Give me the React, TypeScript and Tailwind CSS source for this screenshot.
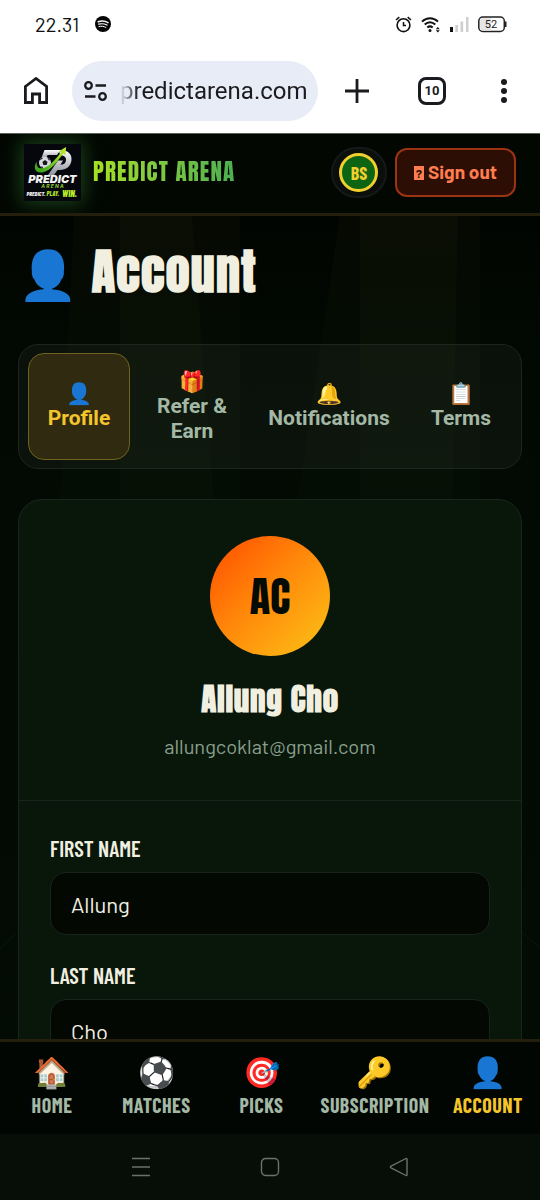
import type { ReactNode } from 'react';

const tabs = [
  { icon: '👤', label: 'Profile', active: true },
  { icon: '🎁', label: 'Refer & Earn', active: false },
  { icon: '🔔', label: 'Notifications', active: false },
  { icon: '📋', label: 'Terms', active: false },
];

const links = [
  { icon: '🏠', label: 'HOME', active: false },
  { icon: '⚽', label: 'MATCHES', active: false },
  { icon: '🎯', label: 'PICKS', active: false },
  { icon: '🔑', label: 'SUBSCRIPTION', active: false },
  { icon: '👤', label: 'ACCOUNT', active: true },
];

function StatusBar() {
  return (
    <div className="flex h-12 shrink-0 items-center justify-between pr-[33px] pl-[35px] text-[#111]">
      <div className="flex items-center gap-4">
        <span className="font-['Barlow',sans-serif] text-xl leading-6">22.31</span>
        <svg width="16" height="16" viewBox="0 0 16 16" aria-hidden="true">
          <circle cx="8" cy="8" r="8" fill="#050505" />
          <g fill="none" stroke="#fff" strokeLinecap="round">
            <path d="M3.2 5.7c3.3-1 7-.7 9.8.9" strokeWidth="1.5" />
            <path d="M3.6 8.2c2.9-.8 5.9-.5 8.4.9" strokeWidth="1.2" />
            <path d="M4 10.5c2.5-.6 4.8-.3 6.9.9" strokeWidth="1" />
          </g>
        </svg>
      </div>
      <div className="flex items-center gap-[9px]">
        <svg width="17" height="17" viewBox="0 0 17 17" fill="none" stroke="#111" aria-hidden="true">
          <circle cx="8.5" cy="9.2" r="6.4" strokeWidth="1.6" />
          <path d="M8.5 6v3.5H11" strokeWidth="1.5" />
          <path d="M1 4 4.300 1.200M16 4 12.700 1.200" strokeWidth="1.6" />
        </svg>
        <svg width="20" height="17" viewBox="0 0 20 17" fill="none" stroke="#111" aria-hidden="true">
          <path d="M1 5.600C5.800 1 12.200 1 17 5.600" strokeWidth="2" />
          <path d="M3.700 8.600c3.300-3 7.300-3 10.600 0" strokeWidth="2" />
          <path d="M6.300 11.500c1.800-1.500 3.600-1.500 5.400 0" strokeWidth="2" />
          <circle cx="9" cy="14.5" r="1.5" fill="#111" stroke="none" />
          <path d="M14.800 13.200h4l-2-2.200zM14.800 14.200h4l-2 2.200z" fill="#111" stroke="none" />
        </svg>
        <svg width="19" height="17" viewBox="0 0 19 17" aria-hidden="true">
          <path d="M0 11h3v5H0z" fill="#111" />
          <path d="M5.300 9H8v7H5.300zM10.500 5.500h2.700V16h-2.700zM16 1h2.500v15H16z" fill="#cfcfcf" />
        </svg>
        <svg width="29" height="17" viewBox="0 0 29 17" aria-hidden="true">
          <rect x=".8" y="1" width="25.5" height="14.5" rx="4" fill="#fff" stroke="#222" strokeWidth="1.5" />
          <path d="M2 5a3 3 0 0 1 3-3h8v12.500H5a3 3 0 0 1-3-3z" fill="#e6e6e6" />
          <path d="M27 5.500h1.500v5.500H27z" fill="#222" />
          <text x="13" y="12.3" textAnchor="middle" fontSize="11" fontFamily="Roboto, sans-serif" fill="#222">52</text>
        </svg>
      </div>
    </div>
  );
}

function BrowserBar() {
  return (
    <div className="flex h-[85px] shrink-0 items-center pr-[33px] pl-6 text-[#1b1b1f]">
      <button type="button" aria-label="Home page" className="h-7 w-6">
        <svg width="24" height="28" viewBox="0 0 24 28" fill="none" stroke="currentColor" strokeWidth="2.8" aria-hidden="true">
          <path d="M1.400 9.500 12 1.500l10.600 8V25.500h-7v-8.500H8.400v8.500h-7z" />
        </svg>
      </button>
      <div className="ml-6 flex h-[60px] min-w-0 flex-1 items-center gap-3 rounded-full bg-[#e8ecf6] px-3">
        <svg className="shrink-0" width="24" height="20" viewBox="0 0 24 20" fill="none" stroke="currentColor" strokeWidth="2.3" aria-hidden="true">
          <circle cx="4.5" cy="4.5" r="3.3" />
          <path d="M11.500 4.500H22M1 15.500h10.500" />
          <circle cx="18.5" cy="15.5" r="3.3" />
        </svg>
        <span className="bg-linear-to-r from-transparent to-[#1b1b1f] to-[18px] bg-clip-text font-['Roboto',sans-serif] text-2xl text-transparent">predictarena.com</span>
      </div>
      <button type="button" aria-label="New tab" className="ml-[27px]">
        <svg width="24" height="24" viewBox="0 0 24 24" stroke="currentColor" strokeWidth="2.8" aria-hidden="true">
          <path d="M0 12h24M12 0v24" />
        </svg>
      </button>
      <button type="button" aria-label="Tabs" className="ml-[49px] flex size-7 items-center justify-center rounded-lg border-[3px] border-[#1b1b1f] font-['Roboto',sans-serif] text-[13px] font-bold">10</button>
      <button type="button" aria-label="Menu" className="ml-[55px] flex flex-col gap-[3px]">
        <i className="size-1.5 rounded-full bg-[#1b1b1f]" />
        <i className="size-1.5 rounded-full bg-[#1b1b1f]" />
        <i className="size-1.5 rounded-full bg-[#1b1b1f]" />
      </button>
    </div>
  );
}

function Logo() {
  return (
    <svg className="size-[57px] shrink-0 shadow-[0_0_18px_3px_rgba(50,120,50,0.5)]" viewBox="0 0 57 57" role="img" aria-label="Predict Arena logo">
      <defs>
        <linearGradient id="silver" x1="0" y1="0" x2="0" y2="1">
          <stop offset="0" stopColor="#fff" />
          <stop offset="1" stopColor="#8c9199" />
        </linearGradient>
        <linearGradient id="lime" x1="0" y1="1" x2="1" y2="0">
          <stop offset="0" stopColor="#2f9e1c" />
          <stop offset="1" stopColor="#c4f02c" />
        </linearGradient>
      </defs>
      <path fill="#06070c" d="M0 0h57v57H0z" />
      <path d="M20.500 6h16L33 11h-9.500l-1.500 4-4.800-.5z" fill="url(#silver)" />
      <path d="M35 6c8.500-.3 13 3.600 12.500 10C47 22.500 42 26 36 26h-2.500l-3.800 5.500h-6L34 16.500h5l-2.600 4.300c3.400 0 5.300-1.600 5.600-4.600.3-3.200-2-5-6-4.700z" fill="url(#silver)" />
      <circle cx="21" cy="18.8" r="6" fill="#d5d8dc" />
      <path d="m21 16 2.600 1.900-1 3.100h-3.200l-1-3.100zM15.600 16.500l1.600-2.500 2 .3zM23 13.300l2.800 1.700-.6 2zM16.500 22.500l2.500.3-.6 1.600zM24 24l1-2 1.400-.8z" fill="#15171c" />
      <path d="M12.500 17.500c-3.800 7.500-.8 12 6.500 10.800C27 26.500 34 17 39 9.500l2.500 1.500L42 3l-7 4.200 2 1.300C31 16 24.500 23.500 18 24.300c-4 .5-5.700-2-5.500-6.800z" fill="url(#lime)" />
      <g fontStyle="italic" fontFamily="Inter, sans-serif">
        <text x="28.5" y="39.3" textAnchor="middle" fontSize="11" fontWeight="900" fill="#f2f2f2">PREDICT</text>
        <text x="28.5" y="44.3" textAnchor="middle" fontSize="5" fontWeight="700" fill="#8fd02c">A R E N A</text>
      </g>
      <g fontStyle="italic" fontFamily="'Barlow Condensed', sans-serif" fontWeight="800">
        <text x="2.5" y="52" fontSize="6" fill="#eee">PREDICT.</text>
        <text x="22.5" y="52" fontSize="6.5" fill="#a8e02a">PLAY.</text>
        <text x="38" y="52.5" fontSize="9" fill="#b8ee2c">WIN.</text>
      </g>
    </svg>
  );
}

function Header() {
  return (
    <header className="flex h-[83px] shrink-0 items-center overflow-hidden border-t border-b-[3px] border-t-[#566058] border-b-[#231f0c] bg-[#020702] pr-6 pb-0.5 pl-6">
      <a href="#home" className="flex items-center gap-3">
        <Logo />
        <span className="bg-linear-to-r from-[#a6e022] to-[#4caf50] bg-clip-text font-['Anton',sans-serif] text-[23px] tracking-wider whitespace-nowrap text-transparent">PREDICT ARENA</span>
      </a>
      <div className="ml-auto flex items-center gap-2">
        <button type="button" className="flex h-[51px] w-14 items-center justify-center rounded-full border-2 border-[#15191a] bg-[#0a0f0b]">
          <span className="flex size-[39px] items-center justify-center rounded-full border-[3px] border-[#f0cf2e] bg-[#0d6413] font-['Barlow_Condensed',sans-serif] text-lg font-bold text-[#f0d02c]">BS</span>
        </button>
        <button type="button" className="flex h-[49px] items-center gap-1 rounded-xl border-2 border-[#9c3313] bg-[#2c0e04] px-[17px] font-['Barlow',sans-serif] text-[19px] font-bold whitespace-nowrap text-[#ff7d4f]">
          <span className="flex h-[14px] w-[10px] items-center justify-center bg-[#ff7d4f] text-xs text-[#2c0e04]">?</span>
          Sign out
        </button>
      </div>
    </header>
  );
}

function Backdrop() {
  return (
    <svg className="pointer-events-none absolute inset-0 h-full w-full" viewBox="0 0 540 825" preserveAspectRatio="none" aria-hidden="true">
      <defs>
        <linearGradient id="beam" x1="0" y1="0" x2="0" y2="1">
          <stop offset="0" stopColor="#6a6420" stopOpacity=".045" />
          <stop offset="1" stopColor="#3a6a20" stopOpacity=".03" />
        </linearGradient>
        <linearGradient id="ground" x1="0" y1="0" x2="0" y2="1">
          <stop offset="0" stopColor="#010501" />
          <stop offset=".3" stopColor="#020a03" />
          <stop offset="1" stopColor="#030c04" />
        </linearGradient>
      </defs>
      <path fill="url(#ground)" d="M0 0h540v825H0z" />
      <path fill="url(#beam)" d="M74 0h118l22 290H60z" />
      <path fill="url(#beam)" d="M120 0h120v290H120z" />
      <path fill="url(#beam)" d="M340 0h118l-6 290H297z" />
      <path fill="url(#beam)" d="M360 0h120v290H360z" />
      <path fill="none" stroke="#0a170c" strokeWidth="1" d="M0 734 20 716M540 734l-20-18" />
    </svg>
  );
}

function Field({ id, label, value }: { id: string; label: string; value: string }) {
  return (
    <div className="flex flex-col gap-2">
      <label htmlFor={id} className="font-['Barlow_Condensed',sans-serif] text-[22px] leading-8 font-semibold text-[#f1efe0]">{label}</label>
      <input id={id} defaultValue={value} className="h-[63px] w-full rounded-2xl border border-[#1a231b] bg-[#030803] px-5 font-['Barlow',sans-serif] text-[22px] text-[#f1efe0]" />
    </div>
  );
}

function SystemButton({ label, children }: { label: string; children: ReactNode }) {
  return (
    <button type="button" aria-label={label}>
      <svg width="20" height="20" viewBox="0 0 20 20" fill="none" stroke="#6b716c" strokeWidth="1.4" strokeLinejoin="round" aria-hidden="true">{children}</svg>
    </button>
  );
}

export default function App() {
  return (
    <div className="flex h-screen flex-col overflow-hidden bg-white">
      <StatusBar />
      <BrowserBar />
      <Header />
      <div className="relative min-h-0 flex-1 overflow-hidden bg-[#020702]">
        <Backdrop />
        <main className="relative px-[18px] pt-5">
          <h1 className="font-['Anton',sans-serif] text-5xl leading-[72px] font-bold tracking-wide text-[#f1efe0]">👤 Account</h1>
          <nav aria-label="Account sections" className="mt-9 grid h-[125px] grid-cols-[102fr_112fr_150fr_102fr] gap-1.5 rounded-[20px] border border-[#1c261e] bg-[#ffffff0a] px-[9px] py-2">
            {tabs.map((tab) => (
              <button
                key={tab.label}
                type="button"
                className={`flex flex-col items-center justify-center rounded-2xl px-3 font-['Roboto',sans-serif] text-[21px] leading-[25px] font-bold ${
                  tab.active ? 'border border-[#6e621e] bg-[#302b10] text-[#f5c52c]' : 'text-[#a3b8a5]'
                }`}
              >
                <span className="text-[21px] leading-6">{tab.icon}</span>
                {tab.label}
              </button>
            ))}
          </nav>
          <section className="mt-[30px] rounded-3xl border border-[#1a261c] bg-[#09170b]">
            <div className="flex flex-col items-center border-b border-[#1a261c] pt-9 pb-[39px]">
              <div className="flex size-[120px] items-center justify-center rounded-full bg-linear-to-br from-[#ff4500] to-[#f9c316] font-['Anton',sans-serif] text-[42px] text-[#040a04]">AC</div>
              <h2 className="mt-[21px] font-['Anton',sans-serif] text-[31px] leading-[45px] font-bold tracking-wide text-[#f1efe0]">Allung Cho</h2>
              <p className="mt-[9px] font-['Barlow',sans-serif] text-xl leading-[30px] text-[#8ba08d]">allungcoklat@gmail.com</p>
            </div>
            <form className="flex flex-col gap-6 px-[31px] pt-[31px] pb-8">
              <Field id="first-name" label="FIRST NAME" value="Allung" />
              <Field id="last-name" label="LAST NAME" value="Cho" />
            </form>
          </section>
        </main>
      </div>
      <nav aria-label="Main" className="grid h-[95px] shrink-0 grid-cols-[104fr_105fr_105fr_122fr_104fr] border-t-[3px] border-[#231f0c] bg-[#020602] pt-[11px]">
        {links.map((link) => (
          <a
            key={link.label}
            href={`#${link.label.toLowerCase()}`}
            className={`flex flex-col items-center font-['Barlow_Condensed',sans-serif] text-xl leading-8 font-bold tracking-wide ${
              link.active ? 'text-[#f5c52c]' : 'text-[#a3b8a5]'
            }`}
          >
            <span className="text-[30px] leading-9">{link.icon}</span>
            {link.label}
          </a>
        ))}
      </nav>
      <div className="flex h-[66px] shrink-0 items-center justify-center gap-[109px] bg-[#070e07]">
        <SystemButton label="Recent apps"><path d="M1 1.500h18M1 10h18M1 18.500h18" /></SystemButton>
        <SystemButton label="Home"><rect x="1.5" y="1.5" width="17" height="17" rx="4" /></SystemButton>
        <SystemButton label="Back"><path d="M17 1.500 2 9.200q-1.300.8 0 1.600L17 18.500q1 .4 1-.8V2.300q0-1.200-1-.8z" /></SystemButton>
      </div>
    </div>
  );
}
